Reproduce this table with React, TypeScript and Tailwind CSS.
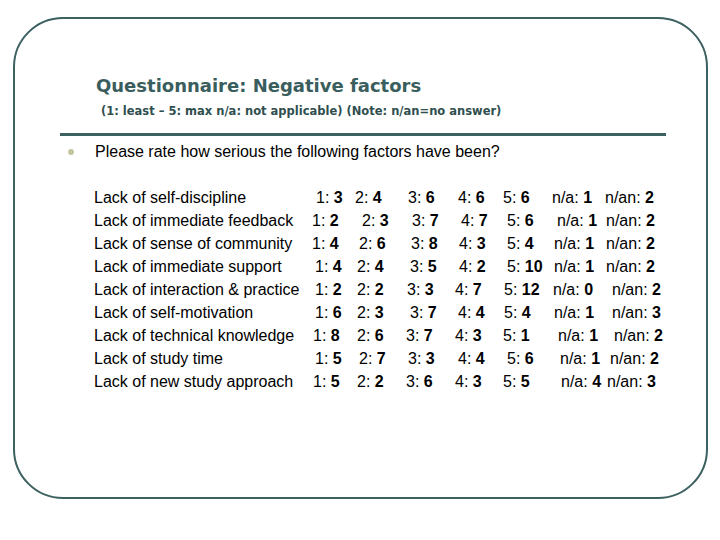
const PAD = [
    "pl-0",
    "pl-[1px]",
    "pl-[2px]",
    "pl-[3px]",
    "pl-[4px]",
    "pl-[5px]",
    "pl-[6px]",
    "pl-[7px]",
    "pl-[8px]",
    "pl-[9px]",
    "pl-[10px]",
    "pl-[11px]",
    "pl-[12px]",
];

const KEYS = ["1:", "2:", "3:", "4:", "5:", "n/a:", "n/an:"];

// each row: label, answers per column, small shift per column (px)
const ROWS = [
    { label: "Lack of self-discipline", values: [3, 4, 6, 6, 6, 1, 2], shift: [4, 0, 2, 3, 0, 2, 3] },
    { label: "Lack of immediate feedback", values: [2, 3, 7, 7, 6, 1, 2], shift: [0, 7, 6, 6, 4, 7, 4] },
    { label: "Lack of sense of community", values: [4, 6, 8, 3, 4, 1, 2], shift: [0, 4, 5, 4, 4, 4, 4] },
    { label: "Lack of immediate support", values: [4, 4, 5, 2, 10, 1, 2], shift: [3, 2, 4, 4, 4, 4, 4] },
    { label: "Lack of interaction & practice", values: [2, 2, 3, 7, 12, 0, 2], shift: [3, 2, 1, 0, 1, 3, 10] },
    { label: "Lack of self-motivation", values: [6, 3, 7, 4, 4, 1, 3], shift: [3, 2, 4, 3, 1, 4, 10] },
    { label: "Lack of technical knowledge", values: [8, 6, 7, 3, 1, 1, 2], shift: [1, 2, 0, 0, 0, 8, 12] },
    { label: "Lack of study time", values: [5, 7, 3, 4, 6, 1, 2], shift: [3, 4, 2, 3, 4, 10, 8] },
    { label: "Lack of new study approach", values: [5, 2, 6, 3, 5, 4, 3], shift: [1, 2, 0, 0, 0, 11, 5] },
];

export default function App() {
    return (
        <div className="w-[720px] h-[540px] bg-white pl-[13px] pt-[17px] font-['Liberation_Sans',Arial,sans-serif] text-black">
            <div className="w-[695px] h-[482px] rounded-[50px] border-2 border-[#3d6060] flex flex-col">
                <h1 className="ml-[81px] mt-[55px] font-['DejaVu_Sans',Verdana,sans-serif] text-[18px] leading-[24px] font-bold text-[#3a5d5d]">
                    Questionnaire: Negative factors
                </h1>
                <p className="ml-[86px] mt-[5px] font-['DejaVu_Sans',Verdana,sans-serif] text-[11.5px] leading-[16px] font-bold text-[#2f4f4f]">
                    (1: least – 5: max n/a: not applicable) (Note: n/an=no answer)
                </p>
                <div className="ml-[45px] mt-[14px] w-[606px] h-[3px] bg-[#3d6060]" />

                <div className="ml-[53px] mt-[6px] flex items-center h-[20px]">
                    <span className="w-[6px] h-[6px] rounded-full bg-[#c6c6a2]" />
                    <span className="ml-[21px] text-[16px] leading-[20px]">
                        Please rate how serious the following factors have been?
                    </span>
                </div>

                <div className="ml-[79px] mt-[24px] flex flex-col">
                    {ROWS.map((row) => (
                        <div
                            key={row.label}
                            className="grid grid-cols-[218px_43px_51px_49px_48px_47px_52px_80px] h-[23px] items-center text-[16px] leading-[23px] whitespace-nowrap"
                        >
                            <span>{row.label}</span>
                            {row.values.map((v, i) => (
                                <span key={i} className={PAD[row.shift[i]]}>
                                    {KEYS[i]} <b>{v}</b>
                                </span>
                            ))}
                        </div>
                    ))}
                </div>
            </div>
        </div>
    );
}
